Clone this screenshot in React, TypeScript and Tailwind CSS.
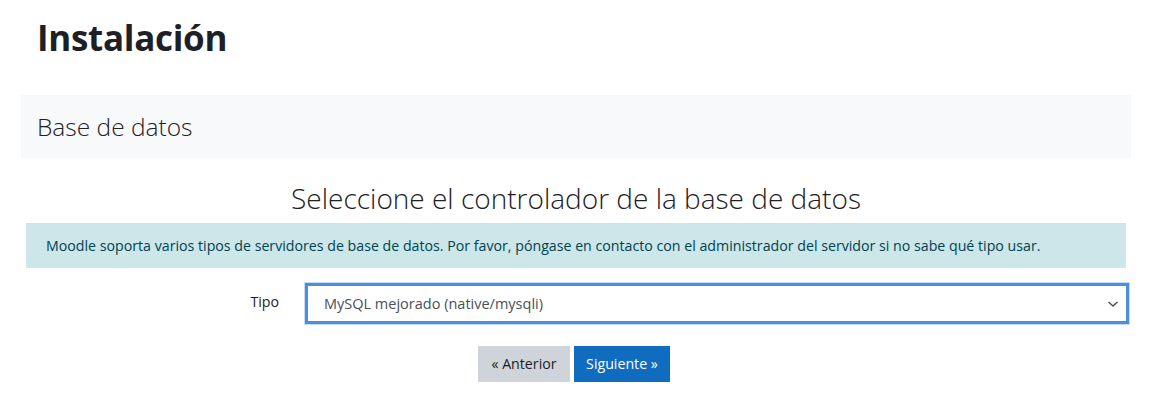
import React from "react";

const font = { fontFamily: '"Open Sans", "Noto Sans", sans-serif' };

const App: React.FC = () => {
  return (
    <div className="min-h-screen w-full bg-white text-[#1d2125] font-['Open_Sans',_'Noto_Sans',_sans-serif]" style={font}>
      <div className="px-[21px] w-[1152px]">
        {/* page title */}
        <h1 className="h-[76px] mb-[19px] flex items-center pl-4 text-[35px] font-bold tracking-[-0.3px]">
          Instalación
        </h1>

        {/* section header */}
        <div className="h-[63px] bg-[#f8f9fa] flex items-center px-4 pt-[2px]">
          <h2 className="text-[24.5px] font-light text-[#1d2125]">Base de datos</h2>
        </div>

        {/* step heading */}
        <div className="h-[65px] pt-[22px]">
          <h3 className="text-center text-[28px] font-light leading-[36px] text-[#1d2125]">
            Seleccione el controlador de la base de datos
          </h3>
        </div>

        {/* notice */}
        <div className="mx-[5px] h-[45px] bg-[#cce6ea] flex items-center px-5 text-[14.2px] text-[#00434e]">
          Moodle soporta varios tipos de servidores de base de datos. Por favor, póngase en contacto con el administrador del servidor si no sabe qué tipo usar.
        </div>

        {/* form row */}
        <div className="flex mt-[14px]">
          <div className="w-[263px] shrink-0 flex justify-end pr-[5px] pt-[9px] text-[14.2px] text-[#1d2125]">
            Tipo
          </div>
          <div className="ml-[20px] w-[826px] h-[43px] border border-[#c6dcf2] p-0">
            <div className="h-full border-[3px] border-[#4a90d9] bg-white flex items-center justify-between pl-[16px] pr-[6px] text-[14.5px] text-[#495057]">
              <span>MySQL mejorado (native/mysqli)</span>
              <svg width="12" height="8" viewBox="0 0 12 8" className="mr-[1px]">
                <path d="M1.5 2 L6 6 L10.5 2" fill="none" stroke="#555" strokeWidth="1.6" />
              </svg>
            </div>
          </div>
        </div>

        {/* buttons */}
        <div className="flex justify-center gap-1 mt-[21px] pr-[4px]">
          <button className="h-[36px] w-[92px] bg-[#ced4da] text-[14.2px] text-[#1d2125]">
            « Anterior
          </button>
          <button className="h-[36px] w-[96px] bg-[#0f6cbf] text-[14.2px] text-white">
            Siguiente »
          </button>
        </div>
      </div>
    </div>
  );
};

export default App;
